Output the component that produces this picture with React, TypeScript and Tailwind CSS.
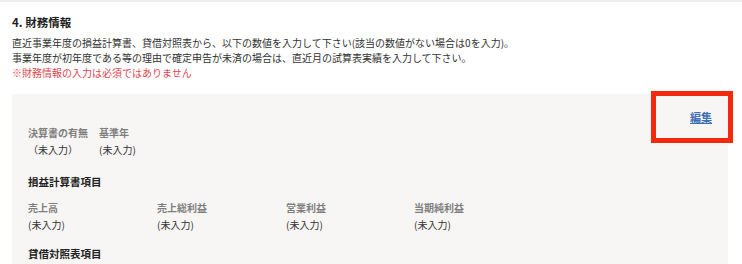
import React from "react";

const font = { fontFamily: '"Noto Sans CJK JP", "Noto Sans", sans-serif' };

function Field({ label, value, className }: { label: string; value: string; className?: string }) {
  return (
    <div className={className}>
      <p className="text-[10px] leading-[15px] font-bold text-[#7f7f7f]">{label}</p>
      <p className="mt-[2px] text-[10px] leading-[15px] text-[#333333]">{value}</p>
    </div>
  );
}

export default function App() {
  const plItems = ["売上高", "売上総利益", "営業利益", "当期純利益"];

  return (
    <div className="relative h-[264px] overflow-hidden border-t-2 border-[#eeeeee] bg-white" style={font}>
      <section className="ml-3 mr-[14px] pt-[12px]">
        <h2 className="text-[11.5px] leading-[16px] font-bold text-[#1f1f1f]">4. 財務情報</h2>
        <div className="mt-[5px] text-[10px] leading-[15px] text-[#333333]">
          <p>直近事業年度の損益計算書、貸借対照表から、以下の数値を入力して下さい(該当の数値がない場合は0を入力)。</p>
          <p>事業年度が初年度である等の理由で確定申告が未済の場合は、直近月の試算表実績を入力して下さい。</p>
          <p className="text-[#e0474f]">※財務情報の入力は必須ではありません</p>
        </div>

        <div className="mt-[14px] bg-[#f7f6f4] px-4 pt-[16px]">
          <div className="flex justify-end">
            <a href="#" className="text-[11px] leading-[15px] font-bold text-[#3d6db5] underline">
              編集
            </a>
          </div>
          <div className="flex gap-[11px]">
            <Field label="決算書の有無" value="（未入力）" />
            <Field label="基準年" value="(未入力)" />
          </div>

          <h3 className="mt-[17px] text-[10.5px] leading-[15px] font-bold text-[#222222]">損益計算書項目</h3>
          <div className="mt-[11px] grid grid-cols-[129px_129px_128px_129px]">
            {plItems.map((item) => (
              <Field key={item} label={item} value="(未入力)" />
            ))}
          </div>

          <h3 className="mt-[14px] pb-4 text-[10.5px] leading-[15px] font-bold text-[#222222]">貸借対照表項目</h3>
        </div>
      </section>

      {/* annotation */}
      <div className="pointer-events-none absolute left-[651px] top-[89px] h-[52px] w-[82px] border-[5px] border-[#f2290c]" />
    </div>
  );
}
